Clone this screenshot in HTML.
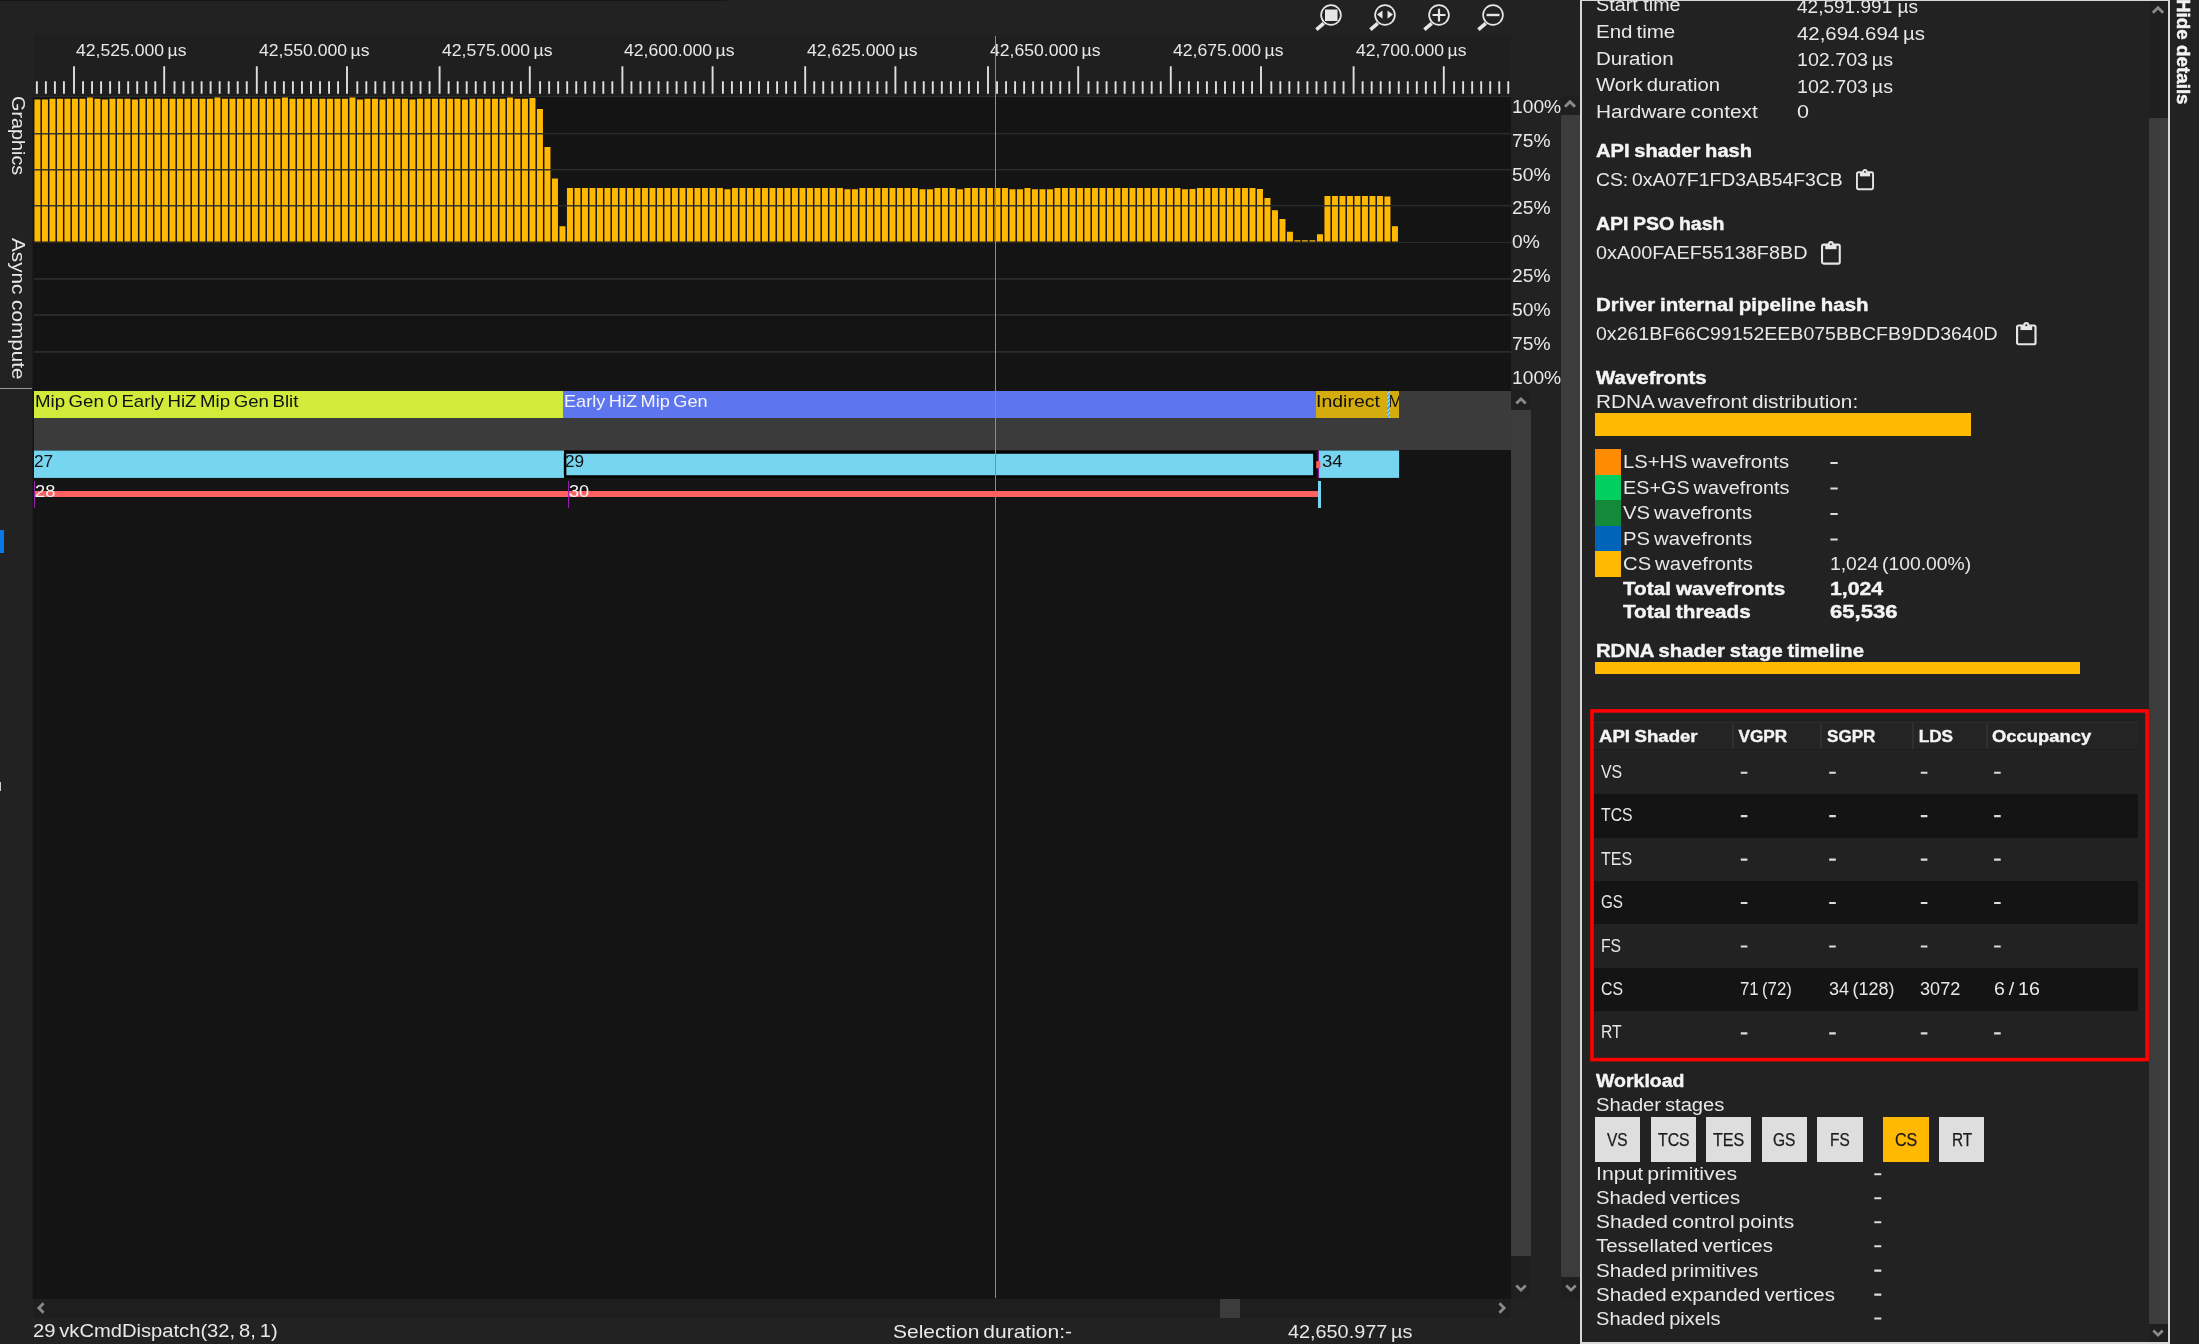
<!DOCTYPE html>
<html><head><meta charset="utf-8"><title>Radeon GPU Profiler</title>
<style>
html,body{margin:0;padding:0;}
body{width:2199px;height:1344px;background:#222222;overflow:hidden;position:relative;font-family:"Liberation Sans",sans-serif;color:#e8e8e8;}
#root{position:absolute;left:0;top:0;width:2199px;height:1344px;overflow:hidden;will-change:transform;}
#root div{position:absolute;}
.t{position:absolute;white-space:pre;line-height:1;transform-origin:0 0;}
svg{position:absolute;overflow:visible;}
</style></head><body><div id="root">
<div style="left:0px;top:0px;width:727px;height:1px;background:#161616;"></div>
<div style="left:34px;top:35px;width:1477px;height:62px;background:#1f1f1f;"></div>
<div style="left:34px;top:96px;width:1477px;height:1px;background:#2c2c2c;"></div>
<div style="left:33px;top:97px;width:1478px;height:292px;background:#141414;"></div>
<div style="left:32px;top:97px;width:1px;height:292px;background:#1c1c1c;"></div>
<div style="left:33px;top:389px;width:1478px;height:910px;background:#141414;"></div>
<div style="left:32px;top:389px;width:1px;height:910px;background:#1c1c1c;"></div>
<svg style="left:0;top:0" width="1520" height="100" viewBox="0 0 1520 100"><path d="M74.00 66.2V93.8M164.20 66.2V93.8M256.80 66.2V93.8M347.00 66.2V93.8M439.60 66.2V93.8M529.80 66.2V93.8M622.40 66.2V93.8M712.60 66.2V93.8M805.20 66.2V93.8M895.40 66.2V93.8M988.00 66.2V93.8M1078.20 66.2V93.8M1170.80 66.2V93.8M1261.00 66.2V93.8M1353.60 66.2V93.8M1443.80 66.2V93.8M36.85 81.2V93.8M45.88 81.2V93.8M54.91 81.2V93.8M63.94 81.2V93.8M83.03 81.2V93.8M92.06 81.2V93.8M101.09 81.2V93.8M110.12 81.2V93.8M119.15 81.2V93.8M128.18 81.2V93.8M137.21 81.2V93.8M146.24 81.2V93.8M155.27 81.2V93.8M174.50 81.2V93.8M183.53 81.2V93.8M192.56 81.2V93.8M201.59 81.2V93.8M210.62 81.2V93.8M219.65 81.2V93.8M228.68 81.2V93.8M237.71 81.2V93.8M246.74 81.2V93.8M265.83 81.2V93.8M274.86 81.2V93.8M283.89 81.2V93.8M292.92 81.2V93.8M301.95 81.2V93.8M310.98 81.2V93.8M320.01 81.2V93.8M329.04 81.2V93.8M338.07 81.2V93.8M357.30 81.2V93.8M366.33 81.2V93.8M375.36 81.2V93.8M384.39 81.2V93.8M393.42 81.2V93.8M402.45 81.2V93.8M411.48 81.2V93.8M420.51 81.2V93.8M429.54 81.2V93.8M448.63 81.2V93.8M457.66 81.2V93.8M466.69 81.2V93.8M475.72 81.2V93.8M484.75 81.2V93.8M493.78 81.2V93.8M502.81 81.2V93.8M511.84 81.2V93.8M520.87 81.2V93.8M540.10 81.2V93.8M549.13 81.2V93.8M558.16 81.2V93.8M567.19 81.2V93.8M576.22 81.2V93.8M585.25 81.2V93.8M594.28 81.2V93.8M603.31 81.2V93.8M612.34 81.2V93.8M631.43 81.2V93.8M640.46 81.2V93.8M649.49 81.2V93.8M658.52 81.2V93.8M667.55 81.2V93.8M676.58 81.2V93.8M685.61 81.2V93.8M694.64 81.2V93.8M703.67 81.2V93.8M722.90 81.2V93.8M731.93 81.2V93.8M740.96 81.2V93.8M749.99 81.2V93.8M759.02 81.2V93.8M768.05 81.2V93.8M777.08 81.2V93.8M786.11 81.2V93.8M795.14 81.2V93.8M814.23 81.2V93.8M823.26 81.2V93.8M832.29 81.2V93.8M841.32 81.2V93.8M850.35 81.2V93.8M859.38 81.2V93.8M868.41 81.2V93.8M877.44 81.2V93.8M886.47 81.2V93.8M905.70 81.2V93.8M914.73 81.2V93.8M923.76 81.2V93.8M932.79 81.2V93.8M941.82 81.2V93.8M950.85 81.2V93.8M959.88 81.2V93.8M968.91 81.2V93.8M977.94 81.2V93.8M997.03 81.2V93.8M1006.06 81.2V93.8M1015.09 81.2V93.8M1024.12 81.2V93.8M1033.15 81.2V93.8M1042.18 81.2V93.8M1051.21 81.2V93.8M1060.24 81.2V93.8M1069.27 81.2V93.8M1088.50 81.2V93.8M1097.53 81.2V93.8M1106.56 81.2V93.8M1115.59 81.2V93.8M1124.62 81.2V93.8M1133.65 81.2V93.8M1142.68 81.2V93.8M1151.71 81.2V93.8M1160.74 81.2V93.8M1179.83 81.2V93.8M1188.86 81.2V93.8M1197.89 81.2V93.8M1206.92 81.2V93.8M1215.95 81.2V93.8M1224.98 81.2V93.8M1234.01 81.2V93.8M1243.04 81.2V93.8M1252.07 81.2V93.8M1271.30 81.2V93.8M1280.33 81.2V93.8M1289.36 81.2V93.8M1298.39 81.2V93.8M1307.42 81.2V93.8M1316.45 81.2V93.8M1325.48 81.2V93.8M1334.51 81.2V93.8M1343.54 81.2V93.8M1362.63 81.2V93.8M1371.66 81.2V93.8M1380.69 81.2V93.8M1389.72 81.2V93.8M1398.75 81.2V93.8M1407.78 81.2V93.8M1416.81 81.2V93.8M1425.84 81.2V93.8M1434.87 81.2V93.8M1454.10 81.2V93.8M1463.13 81.2V93.8M1472.16 81.2V93.8M1481.19 81.2V93.8M1490.22 81.2V93.8M1499.25 81.2V93.8M1508.28 81.2V93.8" stroke="#dedede" stroke-width="1.9" fill="none"/></svg>
<span class="t" style="left:76px;top:43.09px;font-size:15.6px;word-spacing:-1.33px;transform:scaleX(1.1290);">42,525.000 µs</span>
<span class="t" style="left:258.8px;top:43.09px;font-size:15.6px;word-spacing:-1.33px;transform:scaleX(1.1290);">42,550.000 µs</span>
<span class="t" style="left:441.6px;top:43.09px;font-size:15.6px;word-spacing:-1.33px;transform:scaleX(1.1290);">42,575.000 µs</span>
<span class="t" style="left:624.4px;top:43.09px;font-size:15.6px;word-spacing:-1.33px;transform:scaleX(1.1290);">42,600.000 µs</span>
<span class="t" style="left:807.2px;top:43.09px;font-size:15.6px;word-spacing:-1.33px;transform:scaleX(1.1290);">42,625.000 µs</span>
<span class="t" style="left:990px;top:43.09px;font-size:15.6px;word-spacing:-1.33px;transform:scaleX(1.1290);">42,650.000 µs</span>
<span class="t" style="left:1172.8px;top:43.09px;font-size:15.6px;word-spacing:-1.33px;transform:scaleX(1.1290);">42,675.000 µs</span>
<span class="t" style="left:1355.6px;top:43.09px;font-size:15.6px;word-spacing:-1.33px;transform:scaleX(1.1290);">42,700.000 µs</span>
<svg style="left:0;top:0" width="1520" height="250" viewBox="0 0 1520 250"><path d="M34.45 99.6h6.0V241.6h-6.0zM41.95 99.6h6.0V241.6h-6.0zM49.45 98.8h6.0V241.6h-6.0zM56.95 98.8h6.0V241.6h-6.0zM64.45 98.8h6.0V241.6h-6.0zM71.95 98.8h6.0V241.6h-6.0zM79.45 98.8h6.0V241.6h-6.0zM86.95 97.5h6.0V241.6h-6.0zM94.45 98.8h6.0V241.6h-6.0zM101.95 99.6h6.0V241.6h-6.0zM109.45 98.8h6.0V241.6h-6.0zM116.95 98.8h6.0V241.6h-6.0zM124.45 98.8h6.0V241.6h-6.0zM131.95 99.6h6.0V241.6h-6.0zM139.45 98.8h6.0V241.6h-6.0zM146.95 98.8h6.0V241.6h-6.0zM154.45 98.8h6.0V241.6h-6.0zM161.95 98.8h6.0V241.6h-6.0zM169.45 98.8h6.0V241.6h-6.0zM176.95 98.8h6.0V241.6h-6.0zM184.45 98.8h6.0V241.6h-6.0zM191.95 98.8h6.0V241.6h-6.0zM199.45 98.8h6.0V241.6h-6.0zM206.95 98.8h6.0V241.6h-6.0zM214.45 97.5h6.0V241.6h-6.0zM221.95 98.8h6.0V241.6h-6.0zM229.45 98.8h6.0V241.6h-6.0zM236.95 98.8h6.0V241.6h-6.0zM244.45 98.8h6.0V241.6h-6.0zM251.95 98.8h6.0V241.6h-6.0zM259.45 98.8h6.0V241.6h-6.0zM266.95 98.8h6.0V241.6h-6.0zM274.45 98.8h6.0V241.6h-6.0zM281.95 97.5h6.0V241.6h-6.0zM289.45 98.8h6.0V241.6h-6.0zM296.95 98.8h6.0V241.6h-6.0zM304.45 98.8h6.0V241.6h-6.0zM311.95 98.8h6.0V241.6h-6.0zM319.45 98.8h6.0V241.6h-6.0zM326.95 98.8h6.0V241.6h-6.0zM334.45 98.8h6.0V241.6h-6.0zM341.95 98.8h6.0V241.6h-6.0zM349.45 97.5h6.0V241.6h-6.0zM356.95 99.6h6.0V241.6h-6.0zM364.45 98.8h6.0V241.6h-6.0zM371.95 98.8h6.0V241.6h-6.0zM379.45 99.6h6.0V241.6h-6.0zM386.95 98.8h6.0V241.6h-6.0zM394.45 98.8h6.0V241.6h-6.0zM401.95 98.8h6.0V241.6h-6.0zM409.45 99.6h6.0V241.6h-6.0zM416.95 98.8h6.0V241.6h-6.0zM424.45 98.8h6.0V241.6h-6.0zM431.95 98.8h6.0V241.6h-6.0zM439.45 98.8h6.0V241.6h-6.0zM446.95 98.8h6.0V241.6h-6.0zM454.45 98.8h6.0V241.6h-6.0zM461.95 99.6h6.0V241.6h-6.0zM469.45 98.8h6.0V241.6h-6.0zM476.95 98.8h6.0V241.6h-6.0zM484.45 98.8h6.0V241.6h-6.0zM491.95 98.8h6.0V241.6h-6.0zM499.45 98.8h6.0V241.6h-6.0zM506.95 97.5h6.0V241.6h-6.0zM514.45 98.8h6.0V241.6h-6.0zM521.95 98.8h6.0V241.6h-6.0zM529.45 98.0h6.0V241.6h-6.0zM536.95 109.1h6.0V241.6h-6.0zM544.45 147.0h6.0V241.6h-6.0zM551.95 178.4h6.0V241.6h-6.0zM559.45 226.2h6.0V241.6h-6.0zM566.95 188.1h6.0V241.6h-6.0zM574.45 188.1h6.0V241.6h-6.0zM581.95 188.1h6.0V241.6h-6.0zM589.45 188.1h6.0V241.6h-6.0zM596.95 188.1h6.0V241.6h-6.0zM604.45 188.1h6.0V241.6h-6.0zM611.95 188.1h6.0V241.6h-6.0zM619.45 188.1h6.0V241.6h-6.0zM626.95 188.1h6.0V241.6h-6.0zM634.45 188.1h6.0V241.6h-6.0zM641.95 188.1h6.0V241.6h-6.0zM649.45 188.1h6.0V241.6h-6.0zM656.95 188.1h6.0V241.6h-6.0zM664.45 188.1h6.0V241.6h-6.0zM671.95 188.1h6.0V241.6h-6.0zM679.45 188.1h6.0V241.6h-6.0zM686.95 188.1h6.0V241.6h-6.0zM694.45 188.1h6.0V241.6h-6.0zM701.95 188.1h6.0V241.6h-6.0zM709.45 188.1h6.0V241.6h-6.0zM716.95 188.1h6.0V241.6h-6.0zM724.45 189.3h6.0V241.6h-6.0zM731.95 188.1h6.0V241.6h-6.0zM739.45 188.1h6.0V241.6h-6.0zM746.95 188.1h6.0V241.6h-6.0zM754.45 188.1h6.0V241.6h-6.0zM761.95 188.1h6.0V241.6h-6.0zM769.45 188.1h6.0V241.6h-6.0zM776.95 188.1h6.0V241.6h-6.0zM784.45 188.1h6.0V241.6h-6.0zM791.95 188.1h6.0V241.6h-6.0zM799.45 188.1h6.0V241.6h-6.0zM806.95 188.1h6.0V241.6h-6.0zM814.45 188.1h6.0V241.6h-6.0zM821.95 188.1h6.0V241.6h-6.0zM829.45 188.1h6.0V241.6h-6.0zM836.95 188.1h6.0V241.6h-6.0zM844.45 189.3h6.0V241.6h-6.0zM851.95 189.3h6.0V241.6h-6.0zM859.45 188.1h6.0V241.6h-6.0zM866.95 188.1h6.0V241.6h-6.0zM874.45 188.1h6.0V241.6h-6.0zM881.95 188.1h6.0V241.6h-6.0zM889.45 188.1h6.0V241.6h-6.0zM896.95 188.1h6.0V241.6h-6.0zM904.45 188.1h6.0V241.6h-6.0zM911.95 188.1h6.0V241.6h-6.0zM919.45 189.3h6.0V241.6h-6.0zM926.95 189.3h6.0V241.6h-6.0zM934.45 188.1h6.0V241.6h-6.0zM941.95 188.1h6.0V241.6h-6.0zM949.45 188.1h6.0V241.6h-6.0zM956.95 189.3h6.0V241.6h-6.0zM964.45 188.1h6.0V241.6h-6.0zM971.95 188.1h6.0V241.6h-6.0zM979.45 188.1h6.0V241.6h-6.0zM986.95 188.1h6.0V241.6h-6.0zM994.45 188.1h6.0V241.6h-6.0zM1001.95 188.1h6.0V241.6h-6.0zM1009.45 189.3h6.0V241.6h-6.0zM1016.95 189.3h6.0V241.6h-6.0zM1024.45 188.1h6.0V241.6h-6.0zM1031.95 189.3h6.0V241.6h-6.0zM1039.45 189.3h6.0V241.6h-6.0zM1046.95 189.3h6.0V241.6h-6.0zM1054.45 188.1h6.0V241.6h-6.0zM1061.95 188.1h6.0V241.6h-6.0zM1069.45 188.1h6.0V241.6h-6.0zM1076.95 188.1h6.0V241.6h-6.0zM1084.45 188.1h6.0V241.6h-6.0zM1091.95 188.1h6.0V241.6h-6.0zM1099.45 188.1h6.0V241.6h-6.0zM1106.95 188.1h6.0V241.6h-6.0zM1114.45 188.1h6.0V241.6h-6.0zM1121.95 188.1h6.0V241.6h-6.0zM1129.45 188.1h6.0V241.6h-6.0zM1136.95 188.1h6.0V241.6h-6.0zM1144.45 188.1h6.0V241.6h-6.0zM1151.95 188.1h6.0V241.6h-6.0zM1159.45 188.1h6.0V241.6h-6.0zM1166.95 188.1h6.0V241.6h-6.0zM1174.45 188.1h6.0V241.6h-6.0zM1181.95 189.3h6.0V241.6h-6.0zM1189.45 189.0h6.0V241.6h-6.0zM1196.95 188.1h6.0V241.6h-6.0zM1204.45 188.1h6.0V241.6h-6.0zM1211.95 188.1h6.0V241.6h-6.0zM1219.45 188.1h6.0V241.6h-6.0zM1226.95 188.1h6.0V241.6h-6.0zM1234.45 188.1h6.0V241.6h-6.0zM1241.95 188.1h6.0V241.6h-6.0zM1249.45 188.1h6.0V241.6h-6.0zM1256.95 189.0h6.0V241.6h-6.0zM1264.45 198.0h6.0V241.6h-6.0zM1271.95 210.2h6.0V241.6h-6.0zM1279.45 219.1h6.0V241.6h-6.0zM1286.95 231.7h6.0V241.6h-6.0zM1294.45 240.2h6.0V241.6h-6.0zM1301.95 240.2h6.0V241.6h-6.0zM1309.45 240.2h6.0V241.6h-6.0zM1316.95 234.2h6.0V241.6h-6.0zM1324.45 195.9h6.0V241.6h-6.0zM1331.95 195.9h6.0V241.6h-6.0zM1339.45 195.9h6.0V241.6h-6.0zM1346.95 195.9h6.0V241.6h-6.0zM1354.45 195.9h6.0V241.6h-6.0zM1361.95 195.9h6.0V241.6h-6.0zM1369.45 195.9h6.0V241.6h-6.0zM1376.95 195.9h6.0V241.6h-6.0zM1384.45 196.4h6.0V241.6h-6.0zM1391.95 226.2h6.0V241.6h-6.0z" fill="#ffb900"/></svg>
<div style="left:34px;top:133px;width:1477px;height:1px;background:rgba(46,46,46,0.92);"></div>
<div style="left:34px;top:134px;width:1477px;height:1px;background:rgba(40,40,40,0.45);"></div>
<div style="left:34px;top:169px;width:1477px;height:1px;background:rgba(46,46,46,0.92);"></div>
<div style="left:34px;top:170px;width:1477px;height:1px;background:rgba(40,40,40,0.45);"></div>
<div style="left:34px;top:205px;width:1477px;height:1px;background:rgba(46,46,46,0.92);"></div>
<div style="left:34px;top:206px;width:1477px;height:1px;background:rgba(40,40,40,0.45);"></div>
<div style="left:34px;top:241.6px;width:1477px;height:1px;background:#2a2a2a;"></div>
<div style="left:34px;top:278px;width:1477px;height:1px;background:#2b2b2b;"></div>
<div style="left:34px;top:279px;width:1477px;height:1px;background:#262626;"></div>
<div style="left:34px;top:314px;width:1477px;height:1px;background:#2b2b2b;"></div>
<div style="left:34px;top:315px;width:1477px;height:1px;background:#262626;"></div>
<div style="left:34px;top:351px;width:1477px;height:1px;background:#2b2b2b;"></div>
<div style="left:34px;top:352px;width:1477px;height:1px;background:#262626;"></div>
<span class="t" style="left:1512.4px;top:97.66px;font-size:18.6px;transform:scaleX(1.0350);">100%</span>
<span class="t" style="left:1512.4px;top:131.60px;font-size:18.6px;transform:scaleX(1.0350);">75%</span>
<span class="t" style="left:1512.4px;top:165.54px;font-size:18.6px;transform:scaleX(1.0350);">50%</span>
<span class="t" style="left:1512.4px;top:199.48px;font-size:18.6px;transform:scaleX(1.0350);">25%</span>
<span class="t" style="left:1512.4px;top:233.42px;font-size:18.6px;transform:scaleX(1.0350);">0%</span>
<span class="t" style="left:1512.4px;top:267.36px;font-size:18.6px;transform:scaleX(1.0350);">25%</span>
<span class="t" style="left:1512.4px;top:301.30px;font-size:18.6px;transform:scaleX(1.0350);">50%</span>
<span class="t" style="left:1512.4px;top:335.24px;font-size:18.6px;transform:scaleX(1.0350);">75%</span>
<span class="t" style="left:1512.4px;top:369.18px;font-size:18.6px;transform:scaleX(1.0350);">100%</span>
<span class="t" style="left:26.5px;top:95.5px;font-size:18.5px;transform:rotate(90deg) scaleX(1.07);">Graphics</span>
<span class="t" style="left:26.5px;top:238px;font-size:18.5px;transform:rotate(90deg) scaleX(1.118);">Async compute</span>
<div style="left:0px;top:388px;width:32px;height:1px;background:#9a9a9a;"></div>
<div style="left:0px;top:530px;width:4px;height:23px;background:#0a78e6;"></div>
<div style="left:0px;top:782px;width:1px;height:9px;background:#cccccc;"></div>
<div style="left:34px;top:390.5px;width:1477px;height:59.8px;background:#3b3b3b;"></div>
<div style="left:34px;top:391px;width:529px;height:27px;background:#d0eb3a;"></div>
<div style="left:563px;top:391px;width:753px;height:27px;background:#5d76f0;"></div>
<div style="left:1316px;top:391px;width:83px;height:27px;background:#d4ac0d;"></div>
<div style="left:1387px;top:391px;width:3.3px;height:27px;background:repeating-linear-gradient(135deg,#3fa9f5 0 1.5px,#8fd3ff 1.5px 3px);"></div>
<span class="t" style="left:34.6px;top:393.19px;font-size:16.2px;color:#111;word-spacing:-1.38px;transform:scaleX(1.1514);">Mip Gen 0 Early HiZ Mip Gen Blit</span>
<span class="t" style="left:564.3px;top:393.19px;font-size:16.2px;color:#f4f4f4;word-spacing:-1.38px;transform:scaleX(1.1209);">Early HiZ Mip Gen</span>
<span class="t" style="left:1316.4px;top:393.19px;font-size:16.2px;color:#111;transform:scaleX(1.2028);">Indirect</span>
<div style="left:1390.3px;top:391px;width:8.7px;height:27px;overflow:hidden;"><span class="t" style="left:-2.6px;top:2.2px;font-size:16.2px;color:#111;transform:scaleX(1.08)">M</span></div>
<svg style="left:0;top:0" width="1520" height="520" viewBox="0 0 1520 520"><rect x="34" y="450.5" width="530" height="27.4" fill="#76d5ef"/><rect x="1318.6" y="450.5" width="80.5" height="27.4" fill="#76d5ef"/><rect x="565.1" y="452.5" width="749.3" height="23.9" rx="1.2" fill="#76d5ef" stroke="#000" stroke-width="2.5"/><rect x="1318.0" y="450.5" width="1.1" height="27.4" fill="#8a1ea0"/><rect x="1316.2" y="461.2" width="4.2" height="7" fill="#ff5a5a"/></svg>
<span class="t" style="left:34.4px;top:453.78px;font-size:16.8px;color:#111;transform:scaleX(1.0274);">27</span>
<span class="t" style="left:564.6px;top:453.78px;font-size:16.8px;color:#111;transform:scaleX(1.0274);">29</span>
<span class="t" style="left:1321.7px;top:453.78px;font-size:16.8px;color:#111;transform:scaleX(1.1023);">34</span>
<div style="left:34px;top:490.8px;width:1284px;height:6.6px;background:#ff6161;"></div>
<div style="left:34px;top:481px;width:1px;height:27px;background:#9420aa;"></div>
<div style="left:568px;top:481px;width:1px;height:27px;background:#9420aa;"></div>
<div style="left:1317.9px;top:481px;width:3.2px;height:27px;background:#76d5ef;"></div>
<span class="t" style="left:34.6px;top:483.58px;font-size:16.8px;color:#f2f2f2;transform:scaleX(1.0916);">28</span>
<span class="t" style="left:569.2px;top:483.58px;font-size:16.8px;color:#f2f2f2;transform:scaleX(1.0809);">30</span>
<div style="left:995.2px;top:36px;width:1px;height:1262px;background:#8c8c8c;"></div>
<div style="left:1511px;top:390px;width:20px;height:908.5px;background:#1f1f1f;"></div>
<div style="left:1511px;top:410px;width:20px;height:846px;background:#3c3c3c;"></div>
<div style="left:1561px;top:96px;width:19px;height:1202.5px;background:#1f1f1f;"></div>
<div style="left:1561px;top:115px;width:19px;height:1162px;background:#3c3c3c;"></div>
<div style="left:33px;top:1298.5px;width:1478px;height:19.5px;background:#1e1e1e;"></div>
<div style="left:1220.4px;top:1299px;width:19.8px;height:18.5px;background:#3c3c3c;"></div>
<svg style="left:1561.7px;top:96.2px" width="16" height="16" viewBox="-8 -8 16 16"><path d="M-5.0 2.75 L0 -2.25 L5.0 2.75" fill="none" stroke="#8a8a8a" stroke-width="3.0" stroke-linejoin="miter" transform="rotate(0)"/></svg>
<svg style="left:1562.5px;top:1279.5px" width="16" height="16" viewBox="-8 -8 16 16"><path d="M-4.7 2.5850000000000004 L0 -2.115 L4.7 2.5850000000000004" fill="none" stroke="#8a8a8a" stroke-width="2.8" stroke-linejoin="miter" transform="rotate(180)"/></svg>
<svg style="left:1513px;top:392.5px" width="16" height="16" viewBox="-8 -8 16 16"><path d="M-4.7 2.5850000000000004 L0 -2.115 L4.7 2.5850000000000004" fill="none" stroke="#8a8a8a" stroke-width="2.8" stroke-linejoin="miter" transform="rotate(0)"/></svg>
<svg style="left:1513px;top:1279.5px" width="16" height="16" viewBox="-8 -8 16 16"><path d="M-4.7 2.5850000000000004 L0 -2.115 L4.7 2.5850000000000004" fill="none" stroke="#8a8a8a" stroke-width="2.8" stroke-linejoin="miter" transform="rotate(180)"/></svg>
<svg style="left:33.3px;top:1299.6px" width="16" height="16" viewBox="-8 -8 16 16"><path d="M-4.7 2.5850000000000004 L0 -2.115 L4.7 2.5850000000000004" fill="none" stroke="#8a8a8a" stroke-width="2.8" stroke-linejoin="miter" transform="rotate(270)"/></svg>
<svg style="left:1493.5px;top:1299.6px" width="16" height="16" viewBox="-8 -8 16 16"><path d="M-4.7 2.5850000000000004 L0 -2.115 L4.7 2.5850000000000004" fill="none" stroke="#8a8a8a" stroke-width="2.8" stroke-linejoin="miter" transform="rotate(90)"/></svg>
<span class="t" style="left:33px;top:1322.39px;font-size:18.2px;word-spacing:-1.55px;transform:scaleX(1.1080);">29 vkCmdDispatch(32, 8, 1)</span>
<span class="t" style="left:892.6px;top:1322.79px;font-size:18.2px;word-spacing:-1.55px;transform:scaleX(1.1534);">Selection duration:-</span>
<span class="t" style="left:1288.3px;top:1322.79px;font-size:18.2px;word-spacing:-1.55px;transform:scaleX(1.0903);">42,650.977 µs</span>
<svg style="left:1311px;top:0px" width="40" height="36" viewBox="1311 0 40 36"><circle cx="1331" cy="15" r="9.9" fill="none" stroke="#e6e6e6" stroke-width="1.7"/><path d="M1323.7 23.3 L1316.4 29.6" stroke="#e6e6e6" stroke-width="3.6" fill="none"/><rect x="1325" y="9.5" width="12.5" height="11.5" fill="#e6e6e6"/></svg>
<svg style="left:1365px;top:0px" width="40" height="36" viewBox="1365 0 40 36"><circle cx="1385" cy="15" r="9.9" fill="none" stroke="#e6e6e6" stroke-width="1.7"/><path d="M1377.7 23.3 L1370.4 29.6" stroke="#e6e6e6" stroke-width="3.6" fill="none"/><path d="M1382.5 10.5 L1382.5 18.8 L1377 14.6 Z M1387.5 10.5 L1387.5 18.8 L1393 14.6 Z" fill="#e6e6e6"/></svg>
<svg style="left:1419px;top:0px" width="40" height="36" viewBox="1419 0 40 36"><circle cx="1439" cy="15" r="9.9" fill="none" stroke="#e6e6e6" stroke-width="1.7"/><path d="M1431.7 23.3 L1424.4 29.6" stroke="#e6e6e6" stroke-width="3.6" fill="none"/><path d="M1432.5 15 H1445.5 M1439 8.8 V21.5" stroke="#e6e6e6" stroke-width="2.2" fill="none"/></svg>
<svg style="left:1473px;top:0px" width="40" height="36" viewBox="1473 0 40 36"><circle cx="1493" cy="15" r="9.9" fill="none" stroke="#e6e6e6" stroke-width="1.7"/><path d="M1485.7 23.3 L1478.4 29.6" stroke="#e6e6e6" stroke-width="3.6" fill="none"/><path d="M1486.5 15 H1499.5" stroke="#e6e6e6" stroke-width="2.4" fill="none"/></svg>
<div style="left:1580px;top:0px;width:590px;height:1344px;background:transparent;box-sizing:border-box;border:2px solid #d8d8d8;border-top-width:1.5px;"></div>
<div style="left:2149px;top:1.4px;width:19.2px;height:1340.7px;background:#1f1f1f;"></div>
<div style="left:2149px;top:117.7px;width:19.2px;height:1206.7px;background:#3c3c3c;"></div>
<svg style="left:2150px;top:1.8px" width="16" height="16" viewBox="-8 -8 16 16"><path d="M-5.2 2.8600000000000003 L0 -2.3400000000000003 L5.2 2.8600000000000003" fill="none" stroke="#8a8a8a" stroke-width="2.8" stroke-linejoin="miter" transform="rotate(0)"/></svg>
<svg style="left:2150px;top:1325.3px" width="16" height="16" viewBox="-8 -8 16 16"><path d="M-4.7 2.5850000000000004 L0 -2.115 L4.7 2.5850000000000004" fill="none" stroke="#8a8a8a" stroke-width="2.8" stroke-linejoin="miter" transform="rotate(180)"/></svg>
<span class="t" style="left:2192.2px;top:-1px;font-size:18px;font-weight:bold;color:#f4f4f4;-webkit-text-stroke:0.45px #f4f4f4;transform:rotate(90deg) scaleX(1.045);">Hide details</span>
<div style="left:1583px;top:1.4px;width:560px;height:20px;overflow:hidden;"><span class="t" style="left:12.7px;top:-5.24px;font-size:18.0px;transform:scaleX(1.0984)">Start time</span><span class="t" style="left:214px;top:-3.54px;font-size:18.0px;transform:scaleX(1.0571)">42,591.991 µs</span></div>
<span class="t" style="left:1595.7px;top:23.06px;font-size:18px;word-spacing:-1.53px;transform:scaleX(1.1409);">End time</span>
<span class="t" style="left:1797px;top:24.66px;font-size:18px;word-spacing:-1.53px;transform:scaleX(1.1334);">42,694.694 µs</span>
<span class="t" style="left:1595.7px;top:49.66px;font-size:18px;transform:scaleX(1.1420);">Duration</span>
<span class="t" style="left:1797px;top:51.46px;font-size:18px;word-spacing:-1.53px;transform:scaleX(1.0920);">102.703 µs</span>
<span class="t" style="left:1595.7px;top:76.36px;font-size:18px;word-spacing:-1.53px;transform:scaleX(1.1244);">Work duration</span>
<span class="t" style="left:1797px;top:78.36px;font-size:18px;word-spacing:-1.53px;transform:scaleX(1.0920);">102.703 µs</span>
<span class="t" style="left:1595.7px;top:102.56px;font-size:18px;word-spacing:-1.53px;transform:scaleX(1.1595);">Hardware context</span>
<span class="t" style="left:1797px;top:102.76px;font-size:18px;transform:scaleX(1.1987);">0</span>
<span class="t" style="left:1595.7px;top:142.26px;font-size:18px;font-weight:bold;-webkit-text-stroke:0.4px #f4f4f4;color:#f4f4f4;word-spacing:-0.72px;transform:scaleX(1.1181);">API shader hash</span>
<span class="t" style="left:1595.7px;top:171.26px;font-size:18px;word-spacing:-1.53px;transform:scaleX(1.0746);">CS: 0xA07F1FD3AB54F3CB</span>
<svg style="left:1856.1px;top:168.6px" width="18" height="21.3" viewBox="0 0 20 23.7" preserveAspectRatio="none"><rect x="1.05" y="3.6" width="17.9" height="19.0" rx="1.6" fill="none" stroke="#e6e6e6" stroke-width="2.1"/><rect x="4.3" y="3.6" width="11.4" height="4.6" fill="#e6e6e6"/><circle cx="10" cy="3.0" r="2.9" fill="#e6e6e6"/><circle cx="10" cy="3.2" r="1.0" fill="#222222"/></svg>
<span class="t" style="left:1595.7px;top:215.06px;font-size:18px;font-weight:bold;-webkit-text-stroke:0.4px #f4f4f4;color:#f4f4f4;word-spacing:-0.72px;transform:scaleX(1.0827);">API PSO hash</span>
<span class="t" style="left:1595.7px;top:243.96px;font-size:18px;transform:scaleX(1.1009);">0xA00FAEF55138F8BD</span>
<svg style="left:1821.1px;top:241px" width="19.8" height="23.7" viewBox="0 0 20 23.7" preserveAspectRatio="none"><rect x="1.05" y="3.6" width="17.9" height="19.0" rx="1.6" fill="none" stroke="#e6e6e6" stroke-width="2.1"/><rect x="4.3" y="3.6" width="11.4" height="4.6" fill="#e6e6e6"/><circle cx="10" cy="3.0" r="2.9" fill="#e6e6e6"/><circle cx="10" cy="3.2" r="1.0" fill="#222222"/></svg>
<span class="t" style="left:1595.7px;top:295.76px;font-size:18px;font-weight:bold;-webkit-text-stroke:0.4px #f4f4f4;color:#f4f4f4;word-spacing:-0.72px;transform:scaleX(1.1362);">Driver internal pipeline hash</span>
<span class="t" style="left:1595.7px;top:324.96px;font-size:18px;transform:scaleX(1.0850);">0x261BF66C99152EEB075BBCFB9DD3640D</span>
<svg style="left:2015.5px;top:322.4px" width="20.6" height="23.3" viewBox="0 0 20 23.7" preserveAspectRatio="none"><rect x="1.05" y="3.6" width="17.9" height="19.0" rx="1.6" fill="none" stroke="#e6e6e6" stroke-width="2.1"/><rect x="4.3" y="3.6" width="11.4" height="4.6" fill="#e6e6e6"/><circle cx="10" cy="3.0" r="2.9" fill="#e6e6e6"/><circle cx="10" cy="3.2" r="1.0" fill="#222222"/></svg>
<span class="t" style="left:1595.7px;top:368.86px;font-size:18px;font-weight:bold;-webkit-text-stroke:0.4px #f4f4f4;color:#f4f4f4;transform:scaleX(1.1371);">Wavefronts</span>
<span class="t" style="left:1595.7px;top:392.66px;font-size:18px;word-spacing:-1.53px;transform:scaleX(1.1548);">RDNA wavefront distribution:</span>
<div style="left:1595.2px;top:413.3px;width:375.5px;height:22.5px;background:#ffb900;"></div>
<div style="left:1595.2px;top:449.1px;width:25.8px;height:25.7px;background:#ff8c00;"></div>
<span class="t" style="left:1623.4px;top:453.26px;font-size:18px;word-spacing:-1.53px;transform:scaleX(1.1213);">LS+HS wavefronts</span>
<div style="left:1595.2px;top:474.65px;width:25.8px;height:25.7px;background:#00d060;"></div>
<span class="t" style="left:1623.4px;top:478.76px;font-size:18px;word-spacing:-1.53px;transform:scaleX(1.1023);">ES+GS wavefronts</span>
<div style="left:1595.2px;top:500.2px;width:25.8px;height:25.7px;background:#128a3a;"></div>
<span class="t" style="left:1623.4px;top:504.26px;font-size:18px;word-spacing:-1.53px;transform:scaleX(1.1273);">VS wavefronts</span>
<div style="left:1595.2px;top:525.75px;width:25.8px;height:25.7px;background:#0064b8;"></div>
<span class="t" style="left:1623.4px;top:529.76px;font-size:18px;word-spacing:-1.53px;transform:scaleX(1.1273);">PS wavefronts</span>
<div style="left:1595.2px;top:551.3px;width:25.8px;height:25.7px;background:#ffb900;"></div>
<span class="t" style="left:1623.4px;top:555.26px;font-size:18px;word-spacing:-1.53px;transform:scaleX(1.1254);">CS wavefronts</span>
<span class="t" style="left:1830.2px;top:555.26px;font-size:18px;word-spacing:-1.53px;transform:scaleX(1.0732);">1,024 (100.00%)</span>
<span class="t" style="left:1623.4px;top:579.66px;font-size:18px;font-weight:bold;-webkit-text-stroke:0.4px #f4f4f4;color:#f4f4f4;word-spacing:-0.72px;transform:scaleX(1.1513);">Total wavefronts</span>
<span class="t" style="left:1830.2px;top:579.66px;font-size:18px;font-weight:bold;-webkit-text-stroke:0.4px #f4f4f4;color:#f4f4f4;transform:scaleX(1.1788);">1,024</span>
<span class="t" style="left:1623.4px;top:603.36px;font-size:18px;font-weight:bold;-webkit-text-stroke:0.4px #f4f4f4;color:#f4f4f4;word-spacing:-0.72px;transform:scaleX(1.1508);">Total threads</span>
<span class="t" style="left:1830.2px;top:603.36px;font-size:18px;font-weight:bold;-webkit-text-stroke:0.4px #f4f4f4;color:#f4f4f4;transform:scaleX(1.2278);">65,536</span>
<span class="t" style="left:1595.7px;top:642.16px;font-size:18px;font-weight:bold;-webkit-text-stroke:0.4px #f4f4f4;color:#f4f4f4;word-spacing:-0.72px;transform:scaleX(1.1249);">RDNA shader stage timeline</span>
<div style="left:1595.2px;top:662.3px;width:485px;height:11.8px;background:#ffb900;"></div>
<svg style="left:1580px;top:700px" width="580" height="370" viewBox="1580 700 580 370"><rect x="1592.0" y="710.9" width="555.1" height="348.7" fill="none" stroke="#ff0000" stroke-width="3.6"/></svg>
<div style="left:1594.2px;top:722.2px;width:544.1px;height:27px;background:#242424;"></div>
<div style="left:1594.2px;top:722px;width:544.1px;height:1px;background:#2e2e2e;"></div>
<div style="left:1594.2px;top:748.6px;width:544.1px;height:1.2px;background:#1a1a1a;"></div>
<div style="left:1732px;top:723px;width:2px;height:26px;background:#2f2f2f;"></div>
<div style="left:1820px;top:723px;width:2px;height:26px;background:#2f2f2f;"></div>
<div style="left:1912px;top:723px;width:2px;height:26px;background:#2f2f2f;"></div>
<div style="left:1986px;top:723px;width:2px;height:26px;background:#2f2f2f;"></div>
<span class="t" style="left:1598.9px;top:727.74px;font-size:17.2px;font-weight:bold;-webkit-text-stroke:0.4px #f4f4f4;color:#f4f4f4;word-spacing:-0.69px;transform:scaleX(1.0837);">API Shader</span>
<span class="t" style="left:1738.5px;top:727.74px;font-size:17.2px;font-weight:bold;-webkit-text-stroke:0.4px #f4f4f4;color:#f4f4f4;">VGPR</span>
<span class="t" style="left:1826.9px;top:727.74px;font-size:17.2px;font-weight:bold;-webkit-text-stroke:0.4px #f4f4f4;color:#f4f4f4;transform:scaleX(0.9929);">SGPR</span>
<span class="t" style="left:1918.7px;top:727.74px;font-size:17.2px;font-weight:bold;-webkit-text-stroke:0.4px #f4f4f4;color:#f4f4f4;">LDS</span>
<span class="t" style="left:1991.8px;top:727.74px;font-size:17.2px;font-weight:bold;-webkit-text-stroke:0.4px #f4f4f4;color:#f4f4f4;transform:scaleX(1.0698);">Occupancy</span>
<span class="t" style="left:1600.8px;top:763.70px;font-size:17.6px;transform:scaleX(0.9030);">VS</span>
<div style="left:1594.2px;top:794.2px;width:544.1px;height:43.43px;background:#141414;"></div>
<span class="t" style="left:1600.8px;top:807.15px;font-size:17.6px;transform:scaleX(0.8977);">TCS</span>
<span class="t" style="left:1600.8px;top:850.60px;font-size:17.6px;transform:scaleX(0.9115);">TES</span>
<div style="left:1594.2px;top:881.06px;width:544.1px;height:43.43px;background:#141414;"></div>
<span class="t" style="left:1600.8px;top:894.05px;font-size:17.6px;transform:scaleX(0.8651);">GS</span>
<span class="t" style="left:1600.8px;top:937.50px;font-size:17.6px;transform:scaleX(0.8937);">FS</span>
<div style="left:1594.2px;top:967.92px;width:544.1px;height:43.43px;background:#141414;"></div>
<span class="t" style="left:1600.8px;top:980.95px;font-size:17.6px;transform:scaleX(0.8998);">CS</span>
<span class="t" style="left:1739.8px;top:980.95px;font-size:17.6px;word-spacing:-1.50px;transform:scaleX(0.9563);">71 (72)</span>
<span class="t" style="left:1828.6px;top:980.95px;font-size:17.6px;word-spacing:-1.50px;transform:scaleX(1.0225);">34 (128)</span>
<span class="t" style="left:1920.2px;top:980.95px;font-size:17.6px;transform:scaleX(1.0293);">3072</span>
<span class="t" style="left:1993.5px;top:980.95px;font-size:17.6px;word-spacing:-1.50px;transform:scaleX(1.1183);">6 / 16</span>
<span class="t" style="left:1600.8px;top:1024.40px;font-size:17.6px;transform:scaleX(0.8944);">RT</span>
<span class="t" style="left:1595.7px;top:1072.16px;font-size:18px;font-weight:bold;-webkit-text-stroke:0.4px #f4f4f4;color:#f4f4f4;transform:scaleX(1.0835);">Workload</span>
<span class="t" style="left:1595.7px;top:1096.06px;font-size:18px;word-spacing:-1.53px;transform:scaleX(1.1209);">Shader stages</span>
<div style="left:1595.2px;top:1117.2px;width:45px;height:44.5px;background:#dedede;"></div>
<span class="t" style="left:1607px;top:1131.93px;font-size:17.8px;-webkit-text-stroke:0.25px #1a1a1a;color:#1a1a1a;transform:scaleX(0.8718);">VS</span>
<div style="left:1651px;top:1117.2px;width:45px;height:44.5px;background:#dedede;"></div>
<span class="t" style="left:1657.8px;top:1131.93px;font-size:17.8px;-webkit-text-stroke:0.25px #1a1a1a;color:#1a1a1a;transform:scaleX(0.8904);">TCS</span>
<div style="left:1706.4px;top:1117.2px;width:45px;height:44.5px;background:#dedede;"></div>
<span class="t" style="left:1713.2px;top:1131.93px;font-size:17.8px;-webkit-text-stroke:0.25px #1a1a1a;color:#1a1a1a;transform:scaleX(0.9041);">TES</span>
<div style="left:1762px;top:1117.2px;width:45px;height:44.5px;background:#dedede;"></div>
<span class="t" style="left:1772.8px;top:1131.93px;font-size:17.8px;-webkit-text-stroke:0.25px #1a1a1a;color:#1a1a1a;transform:scaleX(0.8749);">GS</span>
<div style="left:1817px;top:1117.2px;width:45.7px;height:44.5px;background:#dedede;"></div>
<span class="t" style="left:1830.3px;top:1131.93px;font-size:17.8px;-webkit-text-stroke:0.25px #1a1a1a;color:#1a1a1a;transform:scaleX(0.8661);">FS</span>
<div style="left:1883.3px;top:1117.2px;width:45.7px;height:44.5px;background:#ffb900;"></div>
<span class="t" style="left:1894.5px;top:1131.93px;font-size:17.8px;-webkit-text-stroke:0.25px #1a1a1a;color:#1a1a1a;transform:scaleX(0.9018);">CS</span>
<div style="left:1939.1px;top:1117.2px;width:45px;height:44.5px;background:#dedede;"></div>
<span class="t" style="left:1951.7px;top:1131.93px;font-size:17.8px;-webkit-text-stroke:0.25px #1a1a1a;color:#1a1a1a;transform:scaleX(0.8673);">RT</span>
<span class="t" style="left:1595.7px;top:1165.26px;font-size:18px;word-spacing:-1.53px;transform:scaleX(1.1806);">Input primitives</span>
<span class="t" style="left:1595.7px;top:1189.36px;font-size:18px;word-spacing:-1.53px;transform:scaleX(1.1298);">Shaded vertices</span>
<span class="t" style="left:1595.7px;top:1213.36px;font-size:18px;word-spacing:-1.53px;transform:scaleX(1.1592);">Shaded control points</span>
<span class="t" style="left:1595.7px;top:1237.36px;font-size:18px;word-spacing:-1.53px;transform:scaleX(1.1373);">Tessellated vertices</span>
<span class="t" style="left:1595.7px;top:1261.66px;font-size:18px;word-spacing:-1.53px;transform:scaleX(1.1459);">Shaded primitives</span>
<span class="t" style="left:1595.7px;top:1285.66px;font-size:18px;word-spacing:-1.53px;transform:scaleX(1.1376);">Shaded expanded vertices</span>
<span class="t" style="left:1595.7px;top:1309.56px;font-size:18px;word-spacing:-1.53px;transform:scaleX(1.1161);">Shaded pixels</span>
<svg style="left:1580px;top:0" width="580" height="1344" viewBox="1580 0 580 1344"><path d="M1830.4 463.00h7.3M1830.4 488.50h7.3M1830.4 514.00h7.3M1830.4 539.50h7.3M1740.8 772.70h6.6M1829.2 772.70h6.6M1920.8 772.70h6.6M1994.1 772.70h6.6M1740.8 816.15h6.6M1829.2 816.15h6.6M1920.8 816.15h6.6M1994.1 816.15h6.6M1740.8 859.60h6.6M1829.2 859.60h6.6M1920.8 859.60h6.6M1994.1 859.60h6.6M1740.8 903.05h6.6M1829.2 903.05h6.6M1920.8 903.05h6.6M1994.1 903.05h6.6M1740.8 946.50h6.6M1829.2 946.50h6.6M1920.8 946.50h6.6M1994.1 946.50h6.6M1740.8 1033.40h6.6M1829.2 1033.40h6.6M1920.8 1033.40h6.6M1994.1 1033.40h6.6M1874.3 1174.20h7.0M1874.3 1198.30h7.0M1874.3 1222.30h7.0M1874.3 1246.30h7.0M1874.3 1270.60h7.0M1874.3 1294.60h7.0M1874.3 1318.50h7.0" stroke="#dcdcdc" stroke-width="2.1" fill="none"/></svg>
</div></body></html>
